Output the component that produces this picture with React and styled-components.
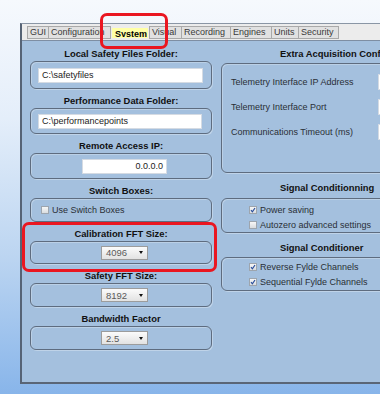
import styled, { createGlobalStyle } from 'styled-components';

const GlobalStyle = createGlobalStyle`
    html, body {
        margin: 0;
        padding: 0;
    }
    body {
        width: 380px;
        height: 394px;
        overflow: hidden;
        background: linear-gradient(180deg, #f6f9fd 0%, #e4eefa 30%, #bcd5f1 65%, #88b5ea 100%);
        font-family: "Liberation Sans", Arial, sans-serif;
    }
`;

const tabs = [
    { name: 'GUI', width: 22 },
    { name: 'Configuration', width: 63 },
    { name: 'System', width: 40, active: true },
    { name: 'Visual', width: 33 },
    { name: 'Recording', width: 50 },
    { name: 'Engines', width: 42 },
    { name: 'Units', width: 28 },
    { name: 'Security', width: 41 },
];

const Check = ({ checked }) => (
    <CheckBox>
        {checked && (
            <svg width="6" height="6" viewBox="0 0 6 6">
                <path d="M1 3.2 L2.4 4.8 L5 1" fill="none" stroke="#2b4f9c" strokeWidth="1.2" />
            </svg>
        )}
    </CheckBox>
);

const Select = ({ value }) => (
    <SelectBox>
        <span>{value}</span>
        <Arrow />
    </SelectBox>
);

const App = () => {
    return (
        <Page>
            <GlobalStyle />
            <Window>
                <TabBar>
                    {tabs.map((t) => (
                        <Tab key={t.name} $width={t.width} $active={t.active}>
                            {t.name}
                        </Tab>
                    ))}
                </TabBar>
                <Content>
                    <LeftColumn>
                        <Section>
                            <Header>Local Safety Files Folder:</Header>
                            <Group $height={28}>
                                <TextInput $width={165}>C:\safetyfiles</TextInput>
                            </Group>
                        </Section>
                        <Section>
                            <Header>Performance Data Folder:</Header>
                            <Group $height={26}>
                                <TextInput $width={164}>C:\performancepoints</TextInput>
                            </Group>
                        </Section>
                        <Section>
                            <Header>Remote Access IP:</Header>
                            <Group $height={26} $center>
                                <TextInput $width={85} $right>0.0.0.0</TextInput>
                            </Group>
                        </Section>
                        <Section>
                            <Header>Switch Boxes:</Header>
                            <Group $height={24} $left>
                                <CheckRow>
                                    <Check />
                                    Use Switch Boxes
                                </CheckRow>
                            </Group>
                        </Section>
                        <Section>
                            <Header>Calibration FFT Size:</Header>
                            <Group $height={23} $center>
                                <Select value="4096" />
                            </Group>
                        </Section>
                        <Section>
                            <Header>Safety FFT Size:</Header>
                            <Group $height={24} $center>
                                <Select value="8192" />
                            </Group>
                        </Section>
                        <Section>
                            <Header>Bandwidth Factor</Header>
                            <Group $height={24} $center>
                                <Select value="2.5" />
                            </Group>
                        </Section>
                    </LeftColumn>
                    <RightColumn>
                        <Section>
                            <SideHeader>Extra Acquisition Configuration</SideHeader>
                            <Group $height={110} $stack $top={3} $pad="5px 0 0 9px">
                                <FieldRow>
                                    <FieldLabel>Telemetry Interface IP Address</FieldLabel>
                                    <FieldInput />
                                </FieldRow>
                                <FieldRow>
                                    <FieldLabel>Telemetry Interface Port</FieldLabel>
                                    <FieldInput />
                                </FieldRow>
                                <FieldRow>
                                    <FieldLabel>Communications Timeout (ms)</FieldLabel>
                                    <FieldInput />
                                </FieldRow>
                            </Group>
                        </Section>
                        <Section>
                            <SideHeader>Signal Conditionning</SideHeader>
                            <Group $height={35} $stack $top={4} $pad="3px 0 0 27px">
                                <CheckRow $tight>
                                    <Check checked />
                                    Power saving
                                </CheckRow>
                                <CheckRow $tight>
                                    <Check />
                                    Autozero advanced settings
                                </CheckRow>
                            </Group>
                        </Section>
                        <Section>
                            <SideHeader>Signal Conditioner</SideHeader>
                            <Group $height={34} $stack $top={3} $pad="1px 0 0 27px">
                                <CheckRow $tight>
                                    <Check checked />
                                    Reverse Fylde Channels
                                </CheckRow>
                                <CheckRow $tight>
                                    <Check checked />
                                    Sequential Fylde Channels
                                </CheckRow>
                            </Group>
                        </Section>
                    </RightColumn>
                </Content>
            </Window>
            <Highlight $x={100} $y={13} $w={68} $h={36} />
            <Highlight $x={22} $y={222} $w={195} $h={50} />
        </Page>
    );
};

const Page = styled.div`
    position: relative;
    width: 380px;
    height: 394px;
    box-sizing: border-box;
    padding: 23px 0 0 20px;
    overflow: hidden;
`;

const Window = styled.div`
    width: 520px;
    height: 361px;
    box-sizing: border-box;
    border-left: 2px solid #566375;
    border-top: 1px solid #8a96a5;
    border-bottom: 2px solid #5a6677;
    background: #a4c0de;
    display: flex;
    flex-direction: column;
`;

const TabBar = styled.div`
    height: 17px;
    box-sizing: border-box;
    display: flex;
    align-items: flex-end;
    padding: 0 0 1px 5px;
    background: #ececec;
    border-bottom: 1px solid #7e8ea3;
`;

const Tab = styled.div`
    width: ${(p) => p.$width}px;
    height: 13px;
    flex-shrink: 0;
    box-sizing: border-box;
    margin-right: -1px;
    padding-left: 2px;
    border: 1px solid #a9a9a9;
    background: #e1e1e1;
    font-size: 9px;
    line-height: 11px;
    color: #3a3a3a;
    white-space: nowrap;
    overflow: hidden;
    ${(p) => p.$active && `
        border-color: transparent;
        background: #ffffa6;
        color: #000;
        font-weight: 700;
        margin: 0 1px 1px 2px;
        height: 10px;
        line-height: 10px;
        width: ${p.$width - 4}px;
    `}
`;

const Content = styled.div`
    display: flex;
    gap: 9px;
    padding: 6px 0 0 8px;
`;

const LeftColumn = styled.div`
    width: 182px;
    flex-shrink: 0;
    display: flex;
    flex-direction: column;
    gap: 5px;
`;

const RightColumn = styled.div`
    width: 300px;
    flex-shrink: 0;
    display: flex;
    flex-direction: column;
    gap: 8px;
`;

const Section = styled.div`
    display: flex;
    flex-direction: column;
`;

const Header = styled.div`
    height: 13px;
    line-height: 13px;
    font-size: 9.4px;
    font-weight: 700;
    color: #111;
    text-align: center;
    white-space: nowrap;
    margin-bottom: 1px;
`;

const SideHeader = styled(Header)`
    text-align: left;
    padding-left: 59px;
    margin-bottom: 0;
`;

const Group = styled.div`
    height: ${(p) => p.$height}px;
    box-sizing: border-box;
    margin-top: ${(p) => p.$top || 0}px;
    border: 1px solid #5e6c7f;
    border-radius: 6px;
    box-shadow: inset 1px 1px 0 rgba(255, 255, 255, 0.25), 1px 1px 0 rgba(255, 255, 255, 0.3);
    display: flex;
    flex-direction: ${(p) => (p.$stack ? 'column' : 'row')};
    align-items: ${(p) => (p.$stack ? 'stretch' : 'center')};
    justify-content: ${(p) => (p.$center ? 'center' : 'flex-start')};
    padding: ${(p) => p.$pad || (p.$left ? '0 0 0 10px' : '0 0 0 7px')};
`;

const TextInput = styled.div`
    width: ${(p) => p.$width}px;
    height: 15px;
    box-sizing: border-box;
    background: #fff;
    border: 1px solid #d5dbe3;
    font-size: 9px;
    line-height: 13px;
    color: #222;
    padding: 0 3px;
    text-align: ${(p) => (p.$right ? 'right' : 'left')};
    white-space: nowrap;
`;

const CheckRow = styled.div`
    display: flex;
    align-items: center;
    gap: 3px;
    height: ${(p) => (p.$tight ? 15 : 13)}px;
    font-size: 9px;
    color: #2a2f36;
    white-space: nowrap;
`;

const CheckBox = styled.span`
    width: 8px;
    height: 8px;
    box-sizing: border-box;
    border: 1px solid #9da5ae;
    background: linear-gradient(180deg, #f7f7f7, #d9dcdf);
    display: inline-flex;
    align-items: center;
    justify-content: center;
`;

const SelectBox = styled.div`
    width: 47px;
    height: 14px;
    box-sizing: border-box;
    border: 1px solid #9c9c9c;
    background: linear-gradient(180deg, #fbfbfb, #e2e2e2);
    display: flex;
    align-items: center;
    justify-content: space-between;
    padding: 0 4px;
    font-size: 9.5px;
    color: #5a5a5a;
`;

const Arrow = styled.span`
    width: 0;
    height: 0;
    border-left: 2.5px solid transparent;
    border-right: 2.5px solid transparent;
    border-top: 3px solid #111;
`;

const FieldRow = styled.div`
    display: flex;
    align-items: center;
    height: 25px;
`;

const FieldLabel = styled.div`
    width: 147px;
    flex-shrink: 0;
    font-size: 9px;
    color: #2a2f36;
    white-space: nowrap;
`;

const FieldInput = styled.div`
    width: 80px;
    height: 14px;
    flex-shrink: 0;
    background: #fff;
    border: 1px solid #d5dbe3;
`;

const Highlight = styled.div`
    position: absolute;
    left: ${(p) => p.$x}px;
    top: ${(p) => p.$y}px;
    width: ${(p) => p.$w}px;
    height: ${(p) => p.$h}px;
    box-sizing: border-box;
    border: 3px solid #ea1620;
    border-radius: 7px;
    pointer-events: none;
`;

export default App;
